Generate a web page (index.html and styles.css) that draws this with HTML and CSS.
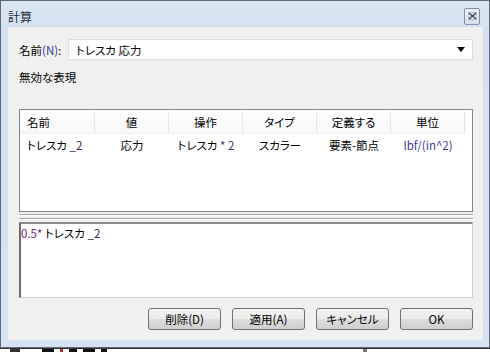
FILE: index.html
```html
<!DOCTYPE html>
<html lang="ja">
<head>
<meta charset="utf-8">
<link rel="stylesheet" href="styles.css">
</head>
<body>
<div class="window">
  <div class="titlebar">
    <span class="title">計算</span>
    <span class="close"><svg width="9" height="8" viewBox="0 0 9 8"><path d="M1 1 L8 7 M8 1 L1 7" stroke="#3a4658" stroke-width="1.4"/><rect x="0.5" y="0.5" width="8" height="7" fill="none" stroke="#8898ad" stroke-width="0.6"/></svg></span>
  </div>
  <div class="content">
    <div class="name-row">
      <span class="label">名前<span class="mn">(N)</span>:</span>
      <div class="combo"><span>トレスカ 応力</span><span class="arrow"></span></div>
    </div>
    <div class="status">無効な表現</div>
    <div class="table">
      <div class="thead">
        <div class="c c1">名前</div>
        <div class="c">値</div>
        <div class="c">操作</div>
        <div class="c">タイプ</div>
        <div class="c">定義する</div>
        <div class="c">単位</div>
      </div>
      <div class="trow">
        <div class="c c1">トレスカ <span class="sub">_2</span></div>
        <div class="c">応力</div>
        <div class="c">トレスカ <span class="op">* 2</span></div>
        <div class="c">スカラー</div>
        <div class="c">要素-節点</div>
        <div class="c unit">lbf/(in^2)</div>
      </div>
    </div>
    <div class="splitter"><i></i><i></i></div>
    <div class="editor"><span class="num">0.5*</span> トレスカ <span class="sub">_2</span></div>
    <div class="buttons">
      <button class="btn">削除(D)</button>
      <button class="btn">適用(A)</button>
      <button class="btn">キャンセル</button>
      <button class="btn">OK</button>
    </div>
  </div>
</div>
<div class="below">
  <i class="bit b1"></i><i class="bit b2"></i><i class="bit b3"></i><i class="bit b4"></i><i class="bit b5"></i><i class="bit b6"></i><i class="bit b7"></i>
</div>
</body>
</html>
```
FILE: styles.css
```css
html, body {
  margin: 0;
  padding: 0;
  background: #ffffff;
  font-family: "Noto Sans CJK JP", "Liberation Sans", sans-serif;
  font-size: 11.5px;
  font-feature-settings: "palt";
  color: #000;
}
.window {
  width: 488px;
  height: 346px;
  border: 1px solid #5f6b79;
  background: linear-gradient(#dbe6f3, #d3e0ef 30px, #d6e3f2);
  display: flex;
  flex-direction: column;
}
.titlebar {
  height: 26px;
  display: flex;
  align-items: center;
  justify-content: space-between;
  padding: 0 9px 0 7px;
}
.title {
  font-size: 12px;
  color: #1e2a3a;
  margin-top: 4px;
}
.close {
  width: 14px;
  height: 15px;
  border: 1px solid #7f8fa5;
  border-radius: 2px;
  background: linear-gradient(#eef3f9, #d5dfeb);
  display: flex;
  align-items: center;
  justify-content: center;
  margin-top: 4px;
}
.content {
  margin: 0 6px 0 7px;
  height: 313px;
  background: #f0f0f0;
  padding: 12px 10px 0 11px;
  box-sizing: border-box;
  display: flex;
  flex-direction: column;
}
.name-row {
  display: flex;
  align-items: center;
  height: 21px;
  flex: none;
}
.label {
  width: 49px;
  flex: none;
}
.mn { color: #3a3a8a; }
.combo {
  flex: 1;
  height: 21px;
  box-sizing: border-box;
  background: #fff;
  border: 1px solid #dcdcdc;
  display: flex;
  align-items: center;
  justify-content: space-between;
  padding: 0 7px 0 7px;
}
.arrow {
  width: 0;
  height: 0;
  border-left: 4px solid transparent;
  border-right: 4px solid transparent;
  border-top: 5px solid #000;
}
.status {
  margin-top: 7px;
  height: 20px;
  line-height: 20px;
  flex: none;
}
.table {
  margin-top: 22px;
  height: 103px;
  flex: none;
  box-sizing: border-box;
  border: 1px solid #828790;
  background: #fff;
  padding-top: 1px;
}
.thead, .trow {
  display: flex;
}
.thead {
  height: 22px;
  background: linear-gradient(#ffffff, #f7f8fa);
  border-bottom: 1px solid #eef0f3;
  margin-right: 7px;
}
.thead .c {
  border-right: 1px solid #e3e5e8;
  line-height: 22px;
}
.c {
  width: 74px;
  flex: none;
  text-align: center;
  box-sizing: border-box;
  white-space: nowrap;
}
.c1 {
  width: 75px;
  text-align: left;
  padding-left: 7px;
}
.trow {
  height: 20px;
  line-height: 20px;
  margin-top: 1px;
}
.sub { color: #2a1f4a; }
.op { color: #333366; }
.unit { color: #3d3d96; }
.splitter {
  height: 10px;
  flex: none;
  display: flex;
  flex-direction: column;
  justify-content: center;
  gap: 2px;
}
.splitter i {
  display: block;
  height: 1px;
  background: #a8a8a8;
  border-bottom: 1px solid #fff;
}
.editor {
  height: 76px;
  flex: none;
  box-sizing: border-box;
  background: #fff;
  border-top: 2px solid #8a8a8a;
  border-left: 2px solid #6e6e6e;
  border-right: 1px solid #d0d0d0;
  border-bottom: 1px solid #d0d0d0;
  padding: 1px 0 0 0;
  line-height: 17px;
}
.num { color: #7a1a7a; }
.buttons {
  margin-top: 10px;
  display: flex;
  justify-content: flex-end;
  gap: 11px;
}
.btn {
  width: 73px;
  height: 22px;
  box-sizing: border-box;
  border: 1px solid #707070;
  border-radius: 3px;
  background: linear-gradient(#f2f2f2 0%, #ebebeb 50%, #dddddd 51%, #cfcfcf 100%);
  font-family: "Noto Sans CJK JP", "Liberation Sans", sans-serif;
  font-size: 11.5px;
  font-feature-settings: "palt";
  color: #000;
  padding: 0;
}
.below {
  height: 4px;
  overflow: hidden;
  border-top: 1px solid #333;
  display: flex;
  gap: 6px;
  padding-left: 10px;
}
.bit {
  display: block;
  height: 4px;
  background: #111;
}
.b1 { width: 10px; background: #333; }
.b2 { width: 12px; margin-left: 16px; }
.b3 { width: 3px; background: #a03030; }
.b4 { width: 8px; }
.b5 { width: 12px; }
.b6 { width: 6px; }
.b7 { width: 4px; margin-left: 250px; background: #777; }
```
